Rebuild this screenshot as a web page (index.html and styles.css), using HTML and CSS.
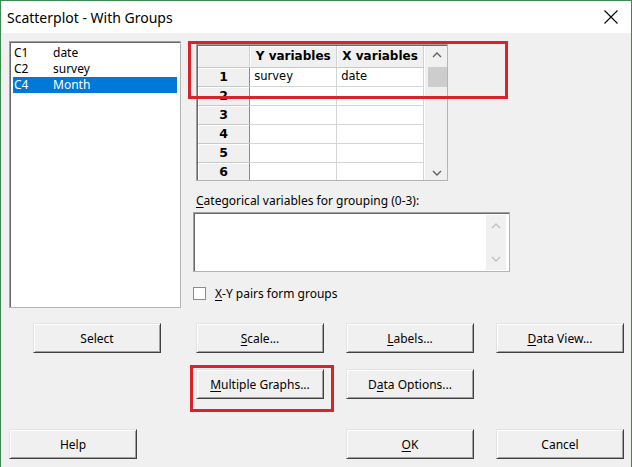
FILE: index.html
```html
<!DOCTYPE html>
<html lang="en">
<head>
    <meta charset="UTF-8">
    <title>Scatterplot - With Groups</title>
    <link rel="stylesheet" href="styles.css">
</head>
<body>

    <div class="window">
        <div class="titlebar">
            <span class="title">Scatterplot - With Groups</span>
            <svg class="close" width="14" height="14" viewBox="0 0 14 14">
                <path d="M0.5 0.5L13.5 13.5M13.5 0.5L0.5 13.5" stroke="#000" stroke-width="1.1" fill="none"/>
            </svg>
        </div>

        <div class="dialog">
            <div class="main">
                <div class="varlist sunken">
                    <div class="item"><span class="colname">C1</span>date</div>
                    <div class="item"><span class="colname">C2</span>survey</div>
                    <div class="item selected"><span class="colname">C4</span>Month</div>
                </div>

                <div class="side">
                    <div class="grid sunken">
                        <table class="vars">
                            <tr>
                                <th class="corner"></th>
                                <th class="colhead">Y variables</th>
                                <th class="colhead">X variables</th>
                            </tr>
                            <tr><th class="rowhead">1</th><td>survey</td><td>date</td></tr>
                            <tr><th class="rowhead">2</th><td></td><td></td></tr>
                            <tr><th class="rowhead">3</th><td></td><td></td></tr>
                            <tr><th class="rowhead">4</th><td></td><td></td></tr>
                            <tr><th class="rowhead">5</th><td></td><td></td></tr>
                            <tr><th class="rowhead">6</th><td></td><td></td></tr>
                            <tr><th class="rowhead"></th><td></td><td></td></tr>
                        </table>
                        <div class="vscroll">
                            <svg class="arrow" width="10" height="6" viewBox="0 0 10 6">
                                <path d="M1 5L5 1L9 5" stroke="#606060" stroke-width="1.4" fill="none"/>
                            </svg>
                            <div class="thumb"></div>
                            <div class="spacer"></div>
                            <svg class="arrow" width="10" height="6" viewBox="0 0 10 6">
                                <path d="M1 1L5 5L9 1" stroke="#606060" stroke-width="1.4" fill="none"/>
                            </svg>
                        </div>
                    </div>

                    <div class="caption"><u>C</u>ategorical variables for grouping (0-3):</div>
                    <div class="textbox sunken">
                        <div class="tscroll">
                            <svg width="10" height="6" viewBox="0 0 10 6">
                                <path d="M1 5L5 1L9 5" stroke="#c2c2c2" stroke-width="1.4" fill="none"/>
                            </svg>
                            <svg width="10" height="6" viewBox="0 0 10 6">
                                <path d="M1 1L5 5L9 1" stroke="#c2c2c2" stroke-width="1.4" fill="none"/>
                            </svg>
                        </div>
                    </div>

                    <div class="check">
                        <span class="box"></span>
                        <span><u>X</u>-Y pairs form groups</span>
                    </div>
                </div>
            </div>

            <div class="btnrow row1">
                <div class="btn btn-select">Select</div>
                <div class="btn"><u>S</u>cale...</div>
                <div class="btn"><u>L</u>abels...</div>
                <div class="btn"><u>D</u>ata View...</div>
            </div>
            <div class="btnrow row2">
                <div class="btn"><u>M</u>ultiple Graphs...</div>
                <div class="btn">D<u>a</u>ta Options...</div>
            </div>
            <div class="btnrow row3">
                <div class="btn btn-help">Help</div>
                <div class="btn"><u>O</u>K</div>
                <div class="btn">Cancel</div>
            </div>
        </div>

        <!-- red annotation frames drawn over the dialog -->
        <div class="mark mark-grid"></div>
        <div class="mark mark-multi"></div>
    </div>

</body>
</html>
```

FILE: styles.css
```css
* {
    box-sizing: border-box;
}

body {
    margin: 0;
    font-family: "Noto Sans", Arial, sans-serif;
    font-size: 12px;
    color: #000;
}

.window {
    position: relative;
    width: 632px;
    height: 467px;
    border: 1px solid #3b8a4e;
    border-bottom: none;
    background-color: #f0f0f0;
    overflow: hidden;
}

.titlebar {
    display: flex;
    align-items: center;
    height: 32px;
    padding-left: 6px;
    background-color: #fff;
}

.title {
    font-size: 14px;
}

.close {
    margin-left: auto;
    margin-right: 13px;
}

.dialog {
    padding: 8px 0 0 8px;
}

.main {
    display: flex;
    height: 267px;
}

/* Sunken 3D edge used by list, grid and text box */
.sunken {
    border: 1px solid #a0a0a0;
    border-right-color: #b4b4b4;
    border-bottom-color: #b4b4b4;
    box-shadow: inset 1px 1px 0 #696969;
    background-color: #fff;
}

.varlist {
    width: 172px;
    height: 267px;
    padding: 3px 3px 0 3px;
}

.item {
    display: flex;
    height: 16px;
    line-height: 16px;
    padding-left: 1px;
}

.colname {
    width: 39px;
}

.selected {
    background-color: #0078d7;
    color: #fff;
}

.side {
    margin-left: 12px;
}

.grid {
    display: flex;
    width: 252px;
    height: 137px;
    margin: 3px 0 0 3px;
    padding: 1px 0 0 1px;
    overflow: hidden;
    background-color: #f0f0f0;
}

.vars {
    border-collapse: collapse;
    font-family: "DejaVu Sans", Tahoma, sans-serif;
    font-size: 11.5px;
    background-color: #fff;
}

.vars th,
.vars td {
    padding: 0;
    height: 19px;
    line-height: 17px;
}

.vars th {
    background-color: #f0f0f0;
    border-right: 1px solid #d0d0d0;
    border-bottom: 1px solid #c8c8c8;
    box-shadow: inset 1px 1px 0 #fff;
    font-weight: bold;
}

.vars .corner,
.vars .colhead {
    height: 21px;
}

.corner {
    width: 52px;
}

.colhead {
    width: 87px;
    font-size: 12px;
}

.rowhead {
    border-right: 1px solid #8c8c8c !important;
    text-align: center;
    font-size: 12.5px;
}

.vars td {
    border-right: 1px solid #d4d4d4;
    border-bottom: 1px solid #d4d4d4;
    padding-left: 4px;
}

.vscroll {
    display: flex;
    flex-direction: column;
    align-items: center;
    width: 23px;
    padding: 6px 0 4px 2px;
    border-left: 1px solid #fff;
}

.thumb {
    width: 19px;
    height: 20px;
    margin-top: 9px;
    background-color: #cdcdcd;
}

.spacer {
    flex: 1;
}

.caption {
    margin-top: 11px;
    line-height: 17px;
    padding-left: 3px;
}

.textbox {
    display: flex;
    justify-content: flex-end;
    width: 317px;
    height: 60px;
    margin-top: 3px;
    padding: 2px 3px 1px 0;
}

.tscroll {
    display: flex;
    flex-direction: column;
    justify-content: space-between;
    align-items: center;
    width: 20px;
    padding: 8px 0 8px;
    background-color: #f0f0f0;
}

.check {
    display: flex;
    align-items: center;
    margin-top: 14px;
    line-height: 15px;
}

.box {
    width: 13px;
    height: 13px;
    margin-right: 9px;
    border: 1px solid #8c8c8c;
    background-color: #fff;
}

.btnrow {
    display: flex;
}

.row1 {
    margin-top: 15px;
    padding-left: 24px;
}

.row2 {
    margin-top: 16px;
    padding-left: 187px;
}

.row3 {
    margin-top: 30px;
}

.btn {
    flex-shrink: 0;
    width: 128px;
    height: 30px;
    margin-right: 22px;
    display: flex;
    align-items: center;
    justify-content: center;
    background-color: #f0f0f0;
    border: 1px solid;
    border-color: #e3e3e3 #404040 #404040 #e3e3e3;
    box-shadow: inset 1px 1px 0 #fff, inset -1px -1px 0 #a0a0a0;
}

.btn:last-child {
    margin-right: 0;
}

.btn-select {
    margin-right: 35px;
}

.btn-help {
    margin-right: 209px;
}

u {
    text-decoration-thickness: 1px;
    text-underline-offset: 2px;
}

/* Red highlight frames */
.mark {
    position: absolute;
    border: 3px solid #d8232a;
}

.mark-grid {
    left: 187px;
    top: 40px;
    width: 320px;
    height: 58px;
}

.mark-multi {
    left: 189px;
    top: 364px;
    width: 144px;
    height: 47px;
}
```
